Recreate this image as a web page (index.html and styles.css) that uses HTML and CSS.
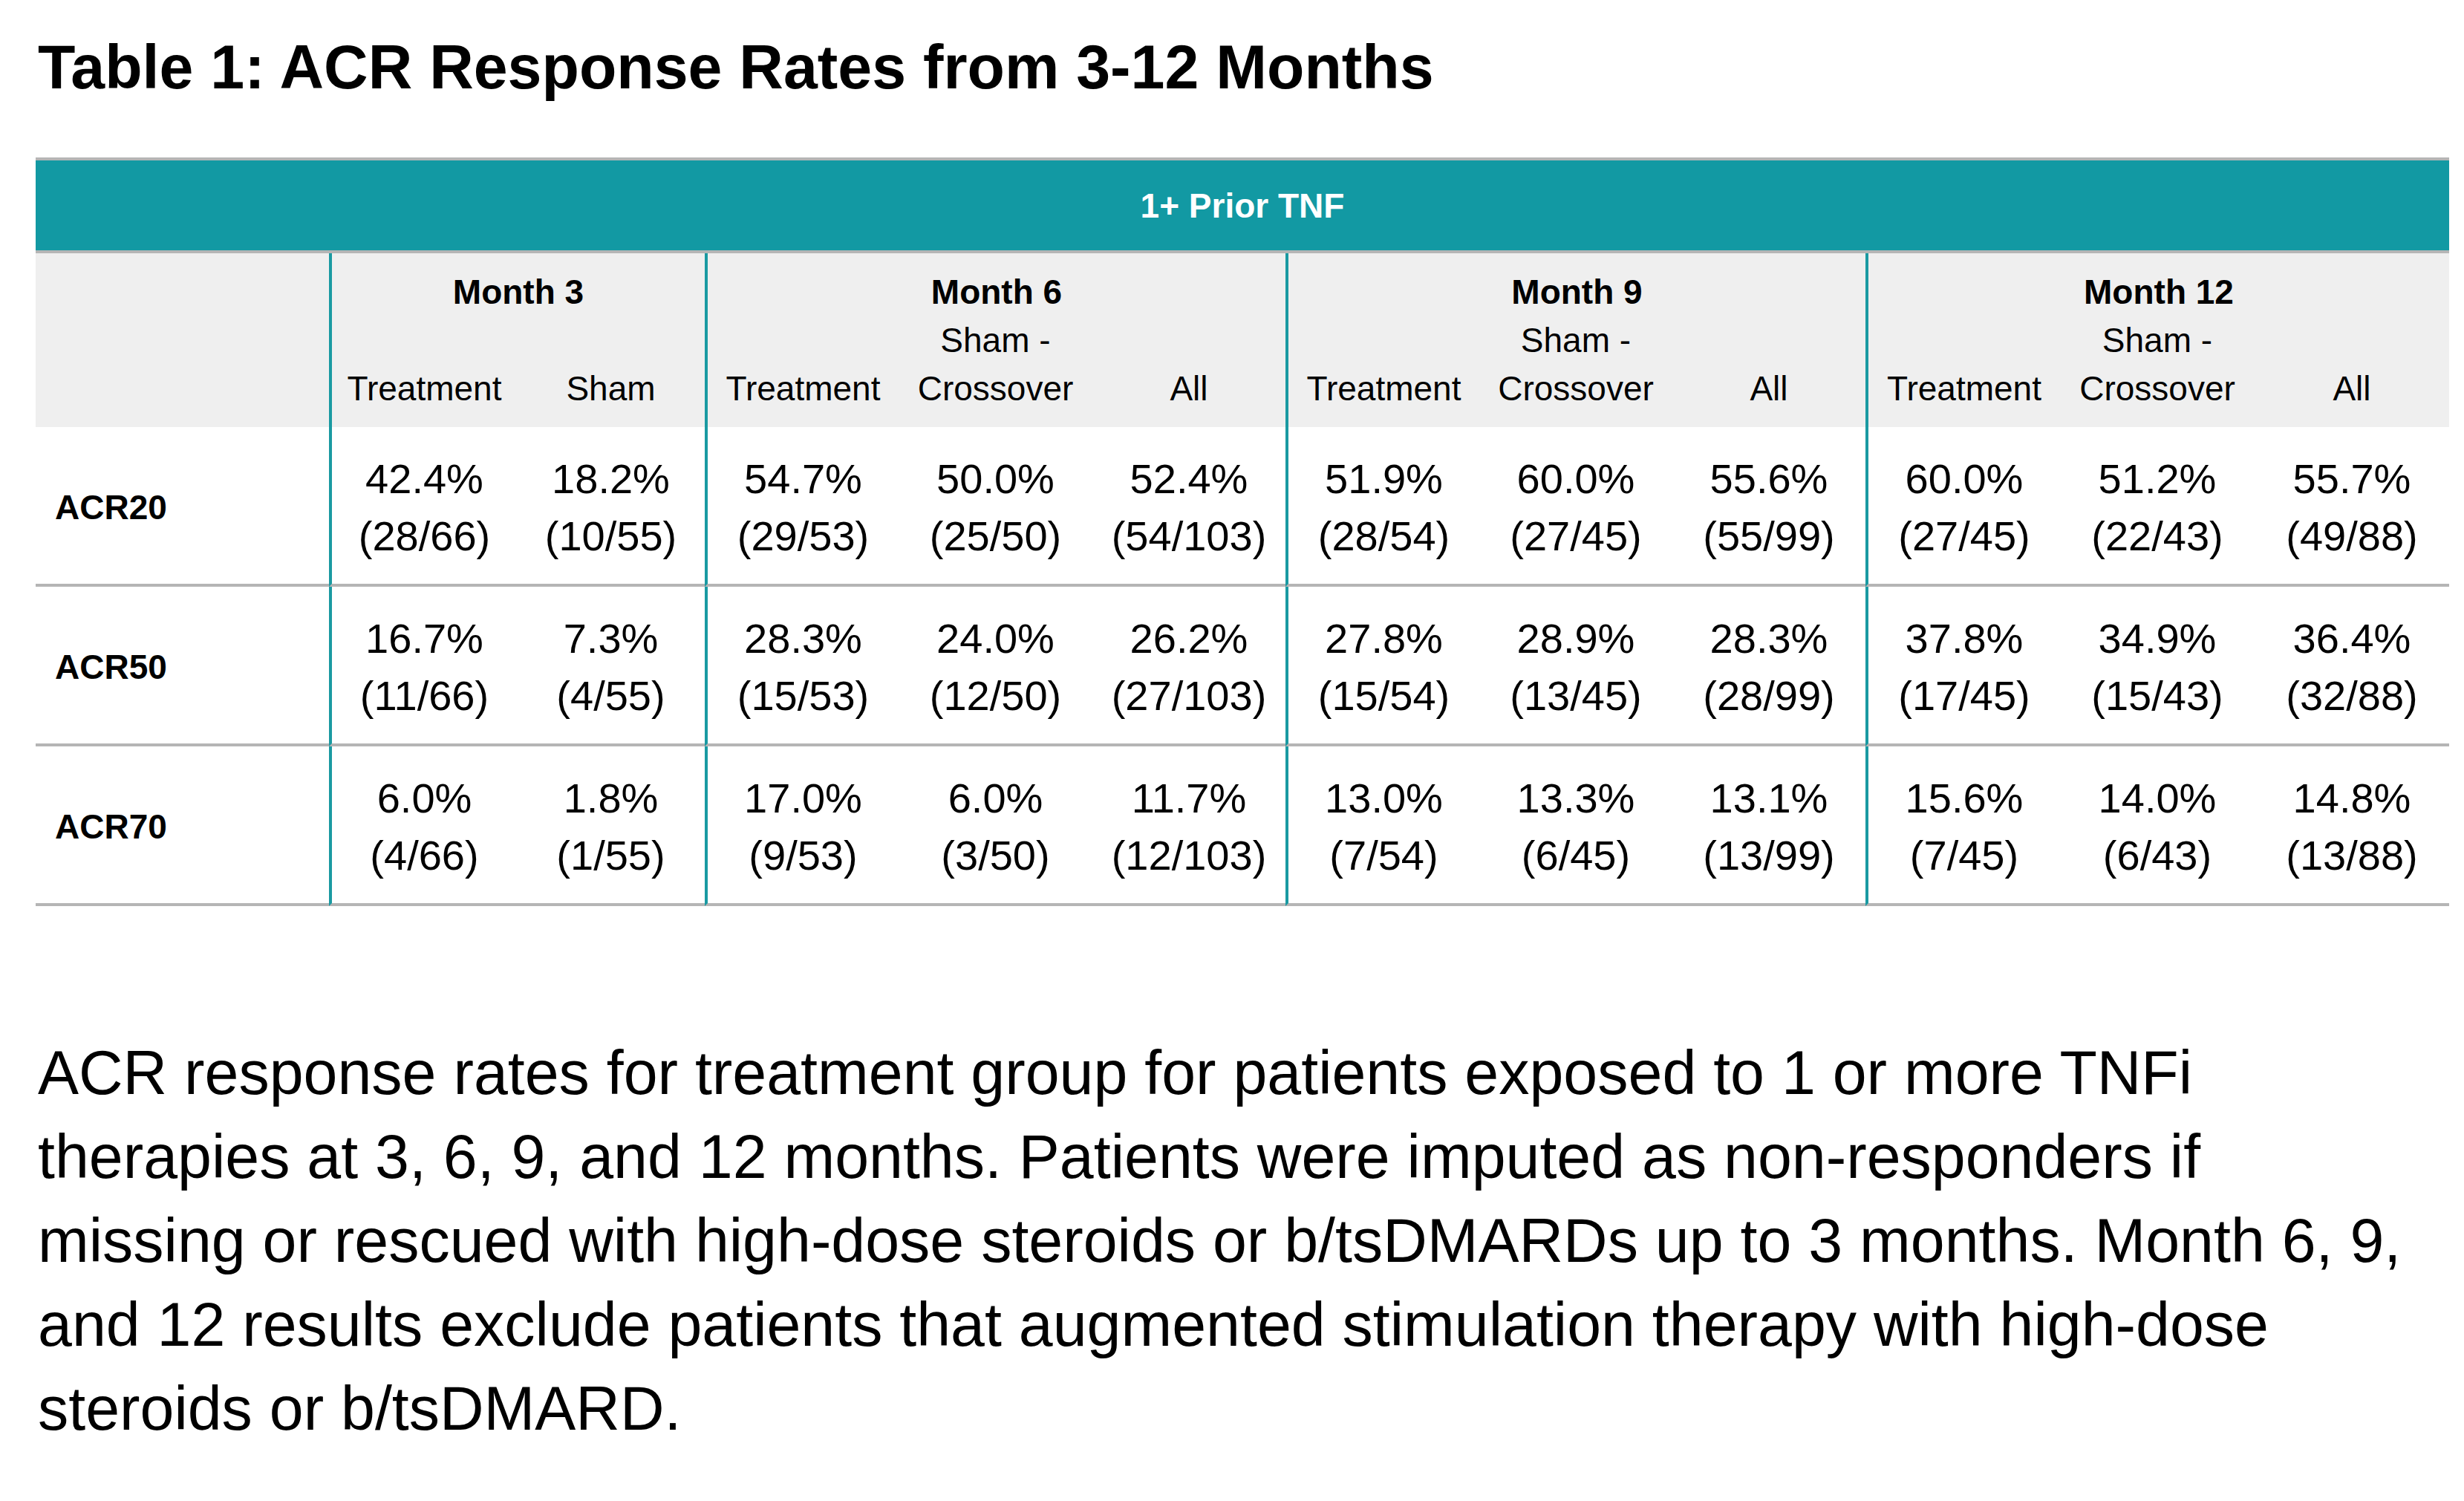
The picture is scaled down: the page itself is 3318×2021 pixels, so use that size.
FILE: index.html
```html
<!DOCTYPE html>
<html lang="en">
<head>
<meta charset="utf-8">
<title>Table 1: ACR Response Rates from 3-12 Months</title>
<link rel="stylesheet" href="styles.css">
</head>
<body>
<main class="page">
  <h1 class="title">Table 1: ACR Response Rates from 3-12 Months</h1>

  <div class="tbl" role="table">
    <div class="band" role="row">1+ Prior TNF</div>

    <div class="hcorner"></div>
    <div class="hmonth span2">Month 3</div>
    <div class="hmonth span3">Month 6</div>
    <div class="hmonth span3">Month 9</div>
    <div class="hmonth span3">Month 12</div>

    <div class="hsub g">Treatment</div>
    <div class="hsub">Sham</div>
    <div class="hsub g">Treatment</div>
    <div class="hsub">Sham -<br>Crossover</div>
    <div class="hsub">All</div>
    <div class="hsub g">Treatment</div>
    <div class="hsub">Sham -<br>Crossover</div>
    <div class="hsub">All</div>
    <div class="hsub g">Treatment</div>
    <div class="hsub">Sham -<br>Crossover</div>
    <div class="hsub">All</div>

    <div class="cell lab">ACR20</div>
    <div class="cell num g">42.4%<br>(28/66)</div>
    <div class="cell num">18.2%<br>(10/55)</div>
    <div class="cell num g">54.7%<br>(29/53)</div>
    <div class="cell num">50.0%<br>(25/50)</div>
    <div class="cell num">52.4%<br>(54/103)</div>
    <div class="cell num g">51.9%<br>(28/54)</div>
    <div class="cell num">60.0%<br>(27/45)</div>
    <div class="cell num">55.6%<br>(55/99)</div>
    <div class="cell num g">60.0%<br>(27/45)</div>
    <div class="cell num">51.2%<br>(22/43)</div>
    <div class="cell num">55.7%<br>(49/88)</div>

    <div class="cell lab">ACR50</div>
    <div class="cell num g">16.7%<br>(11/66)</div>
    <div class="cell num">7.3%<br>(4/55)</div>
    <div class="cell num g">28.3%<br>(15/53)</div>
    <div class="cell num">24.0%<br>(12/50)</div>
    <div class="cell num">26.2%<br>(27/103)</div>
    <div class="cell num g">27.8%<br>(15/54)</div>
    <div class="cell num">28.9%<br>(13/45)</div>
    <div class="cell num">28.3%<br>(28/99)</div>
    <div class="cell num g">37.8%<br>(17/45)</div>
    <div class="cell num">34.9%<br>(15/43)</div>
    <div class="cell num">36.4%<br>(32/88)</div>

    <div class="cell lab">ACR70</div>
    <div class="cell num g">6.0%<br>(4/66)</div>
    <div class="cell num">1.8%<br>(1/55)</div>
    <div class="cell num g">17.0%<br>(9/53)</div>
    <div class="cell num">6.0%<br>(3/50)</div>
    <div class="cell num">11.7%<br>(12/103)</div>
    <div class="cell num g">13.0%<br>(7/54)</div>
    <div class="cell num">13.3%<br>(6/45)</div>
    <div class="cell num">13.1%<br>(13/99)</div>
    <div class="cell num g">15.6%<br>(7/45)</div>
    <div class="cell num">14.0%<br>(6/43)</div>
    <div class="cell num">14.8%<br>(13/88)</div>
  </div>

  <p class="note">ACR response rates for treatment group for patients exposed to 1 or more TNFi therapies at 3, 6, 9, and 12 months. Patients were imputed as non-responders if missing or rescued with high-dose steroids or b/tsDMARDs up to 3 months. Month 6, 9, and 12 results exclude patients that augmented stimulation therapy with high-dose steroids or b/tsDMARD.</p>
</main>
</body>
</html>
```

FILE: styles.css
```css
* {
  box-sizing: border-box;
}

body {
  margin: 0;
  background: #ffffff;
  color: #000000;
  font-family: "Liberation Sans", Arial, Helvetica, sans-serif;
}

.page {
  padding: 43px 20px 0 48px;
}

.title {
  margin: 0 0 75px 3px;
  font-size: 82.5px;
  line-height: 94px;
  font-weight: 700;
}

.tbl {
  display: grid;
  grid-template-columns: 395px 253px 253px 261px 261px 260px 261px 260px 260px 262px 262px 262px;
  width: 3250px;
}

.band {
  grid-column: 1 / -1;
  height: 129px;
  background: #1299a3;
  border-top: 4px solid #b5b5b5;
  border-bottom: 4px solid #b5b5b5;
  color: #ffffff;
  font-weight: 700;
  font-size: 46px;
  display: flex;
  align-items: center;
  justify-content: center;
}

.hcorner {
  grid-row: span 2;
  background: #efefef;
}

.hmonth {
  background: #efefef;
  border-left: 4px solid #1a9aa2;
  padding-top: 20px;
  font-size: 46px;
  line-height: 65px;
  font-weight: 700;
  text-align: center;
}

.span2 {
  grid-column: span 2;
}

.span3 {
  grid-column: span 3;
}

.hsub {
  height: 149px;
  padding-bottom: 19px;
  background: #efefef;
  font-size: 46px;
  line-height: 65px;
  text-align: center;
  display: flex;
  flex-direction: column;
  justify-content: flex-end;
}

.cell {
  height: 215px;
  padding: 31px 0 26px;
  border-bottom: 4px solid #b5b5b5;
  display: flex;
  flex-direction: column;
  justify-content: center;
}

.g {
  border-left: 4px solid #1a9aa2;
}

.lab {
  padding-left: 26px;
  font-size: 46px;
  font-weight: 700;
  line-height: 50px;
}

.num {
  font-size: 56px;
  line-height: 77px;
  text-align: center;
}

.note {
  margin: 168px 0 0 3px;
  max-width: 3195px;
  font-size: 82.5px;
  line-height: 113px;
}
```
